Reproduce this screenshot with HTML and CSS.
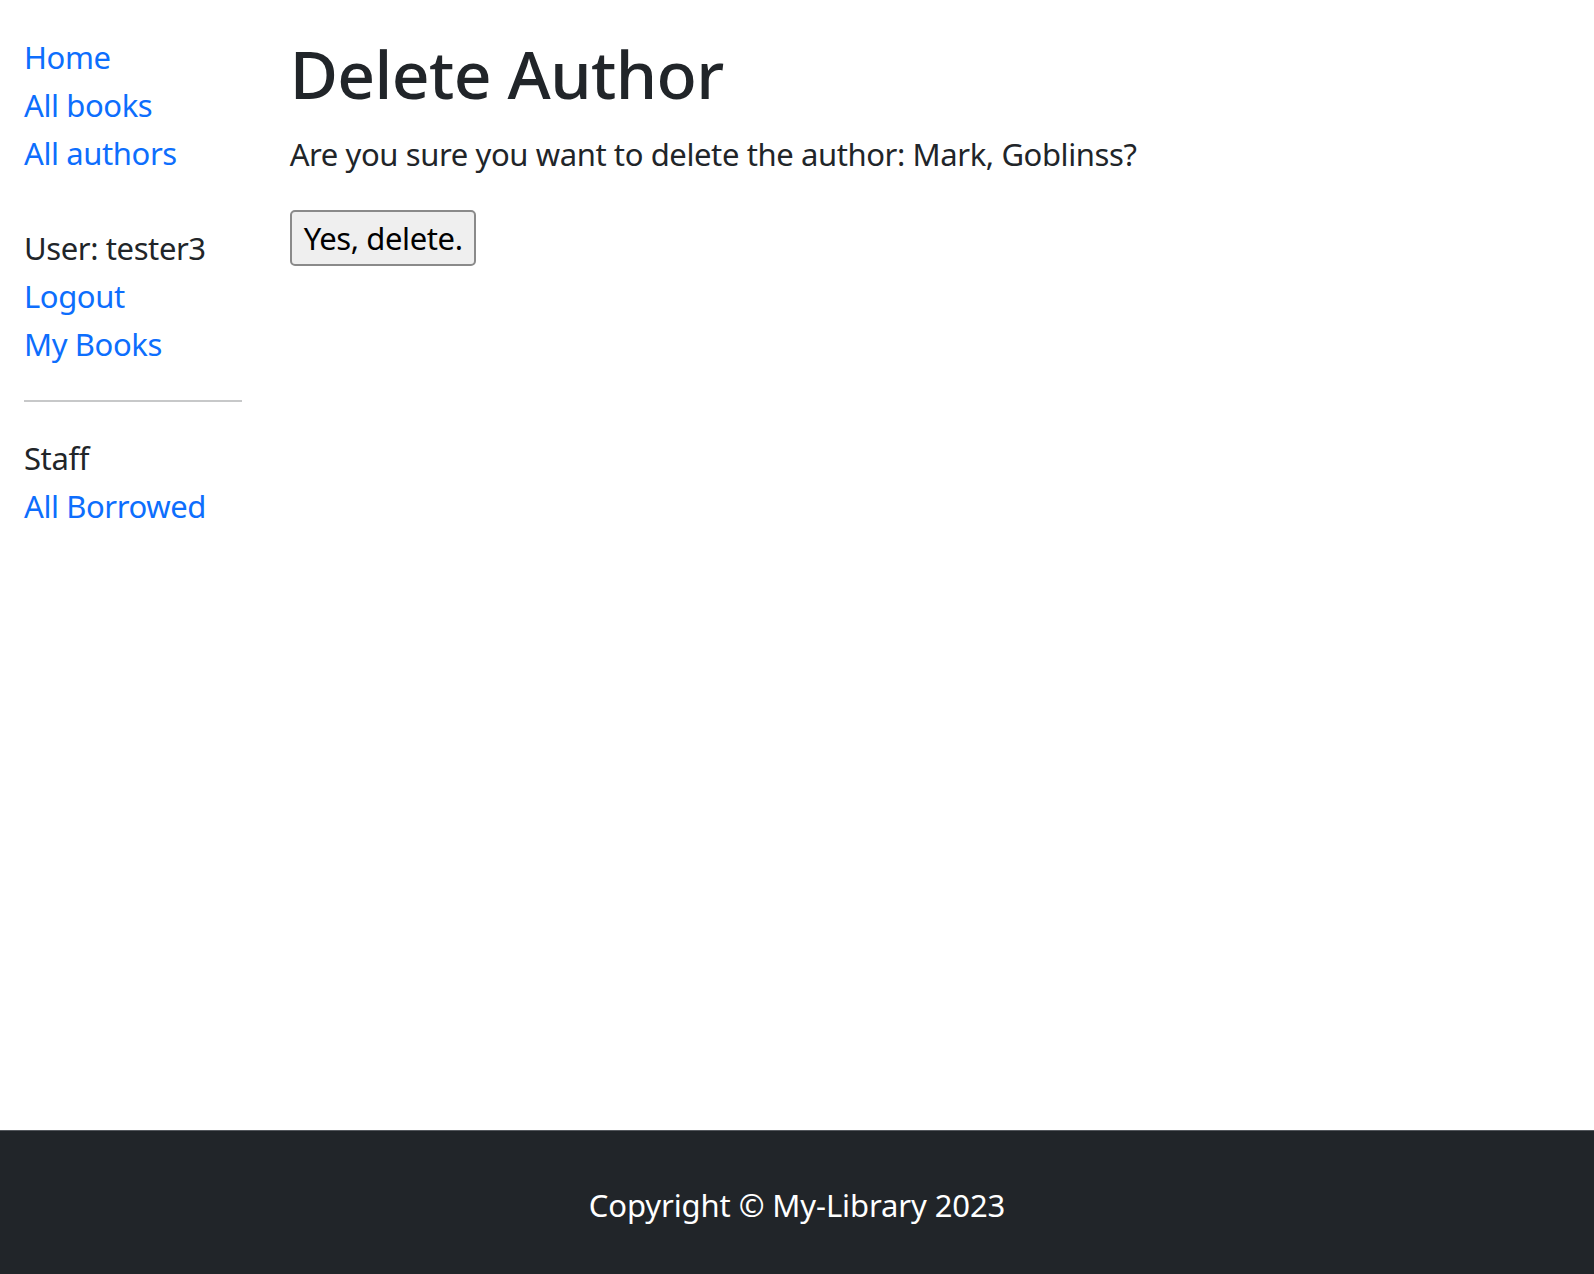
FILE: index.html
```html
<!DOCTYPE html>
<html lang="en">
<head>
<meta charset="utf-8">
<title>Delete Author</title>
<link rel="stylesheet" href="styles.css">
</head>
<body>
<div class="page">
  <div class="container">
    <div class="row">
      <aside class="sidebar">
        <ul class="nav-list">
          <li><a href="#">Home</a></li>
          <li><a href="#">All books</a></li>
          <li><a href="#">All authors</a></li>
        </ul>
        <ul class="nav-list nav-group">
          <li class="plain">User: tester3</li>
          <li><a href="#">Logout</a></li>
          <li><a href="#">My Books</a></li>
        </ul>
        <hr class="divider">
        <ul class="nav-list">
          <li class="plain">Staff</li>
          <li><a href="#">All Borrowed</a></li>
        </ul>
      </aside>
      <main class="content">
        <h1 class="title">Delete Author</h1>
        <p class="question">Are you sure you want to delete the author: Mark, Goblinss?</p>
        <form class="confirm-form">
          <button type="button" class="btn-delete">Yes, delete.</button>
        </form>
      </main>
    </div>
  </div>
  <footer class="footer">
    <p class="copyright">Copyright © My-Library 2023</p>
  </footer>
</div>
</body>
</html>
```

FILE: styles.css
```css
* { box-sizing: border-box; }

html, body {
  margin: 0;
  padding: 0;
}

body {
  font-family: "Noto Sans", "Open Sans", sans-serif;
  font-size: 31px;
  letter-spacing: -0.4px;
  line-height: 48px;
  color: #212529;
  background: #ffffff;
}

.page {
  min-height: 100vh;
  display: flex;
  flex-direction: column;
}

.container {
  flex: 1;
  padding: 0 24px;
}

.row {
  display: flex;
  margin: 0 -24px;
}

.sidebar {
  width: 16.6667%;
  padding: 33px 24px 0;
}

.content {
  width: 83.3333%;
  padding: 32px 24px 0;
}

.nav-list {
  list-style: none;
  margin: 0;
  padding: 0;
}

.nav-group {
  margin-top: 47px;
}

.nav-list a {
  color: #0d6efd;
  text-decoration: none;
}

.plain {
  color: #212529;
}

.divider {
  margin: 32px 0;
  border: 0;
  border-top: 2px solid #212529;
  opacity: 0.25;
}

.title {
  margin: 0 0 16px;
  font-size: 66px;
  letter-spacing: -0.6px;
  line-height: 82px;
  font-weight: 500;
}

.question {
  margin: 0 0 32px;
}

.confirm-form {
  margin: 0;
}

.btn-delete {
  font-family: inherit;
  font-size: 31px;
  letter-spacing: -0.4px;
  line-height: 48px;
  color: #000;
  background: #efefef;
  border: 2px solid #8a8a8a;
  border-radius: 5px;
  padding: 2px 11px 2px 12px;
  margin: 0;
}

.footer {
  background: #212529;
  border-top: 1px solid #53575c;
  padding: 50px 0 45px;
  text-align: center;
  color: #ffffff;
}

.copyright {
  margin: 0;
  letter-spacing: -0.1px;
}
```
